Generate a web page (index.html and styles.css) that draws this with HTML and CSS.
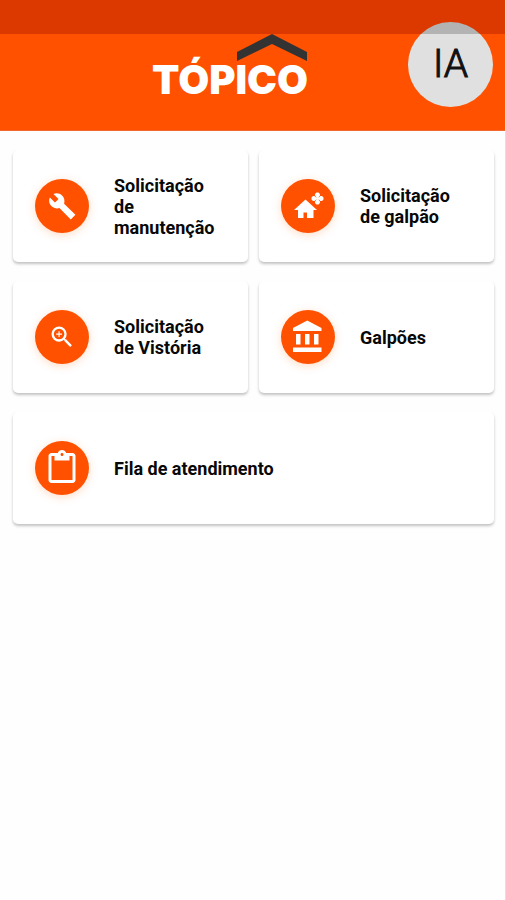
FILE: index.html
```html
<!DOCTYPE html>
<html lang="pt-BR">
<head>
<meta charset="utf-8">
<meta name="viewport" content="width=device-width, initial-scale=1">
<title>Tópico</title>
<link rel="stylesheet" href="styles.css">
</head>
<body>
<header class="header">
  <div class="status-bar"></div>
  <h1 class="logo">TÓPICO
    <svg class="logo-roof" viewBox="0 0 70 28" aria-hidden="true"><path d="M0 18 35 0 70 18v9L35 10 0 27z"/></svg>
  </h1>
  <button class="avatar" type="button">IA</button>
</header>
<main class="menu">
  <a class="card" href="#">
    <span class="badge"><svg class="icon" viewBox="0 0 24 24" aria-hidden="true"><path d="M23.500 19.500 13.800 10c.7-2.400.2-5.100-1.700-7-2-2-5-2.400-7.400-1.300L9 6 6 9 1.600 4.700C.4 7.100.9 10.100 2.900 12.100c1.900 1.900 4.600 2.400 6.900 1.700l9.700 9.700z"/></svg></span>
    <span class="label">Solicitação de manutenção</span>
  </a>
  <a class="card" href="#">
    <span class="badge"><svg class="icon icon-large" viewBox="0 0 36 36" aria-hidden="true"><path d="M15.500 11.500 4 22H8v8h5.500v-5.500H17V30h6.500v-8H27z"/><path d="M26.500 9.200 25 7.500V6l1.500-1.500h2L30 6v1.500l-1.500 1.700v.3h.3L30.500 8H32l1.500 1.500v2L32 13h-1.500l-1.700-1.500h-.3v.3L30 13.500V15l-1.500 1.500h-2L25 15v-1.500l1.500-1.700v-.3h-.3L24.500 13H23l-1.500-1.500v-2L23 8h1.500l1.700 1.500h.3z"/></svg></span>
    <span class="label">Solicitação de galpão</span>
  </a>
  <a class="card" href="#">
    <span class="badge"><svg class="icon" viewBox="0 0 24 24" aria-hidden="true"><path d="M15.500 14h-.79l-.28-.27A6.470 6.470 0 0 0 16 9.500 6.500 6.500 0 1 0 9.500 16c1.610 0 3.090-.59 4.230-1.570l.27.28v.79l5 4.990L20.490 19zm-6 0a4.500 4.500 0 1 1 0-9 4.500 4.500 0 0 1 0 9zM12 10h-2v2H9v-2H7V9h2V7h1v2h2z"/></svg></span>
    <span class="label">Solicitação de Vistória</span>
  </a>
  <a class="card" href="#">
    <span class="badge"><svg class="icon icon-large" viewBox="0 0 24 24" aria-hidden="true"><path d="M4 10v7h3v-7zm6 0v7h3v-7zM2 22h19v-3H2zm14-12v7h3v-7zM11.500 1 2 6v2h19V6z"/></svg></span>
    <span class="label">Galpões</span>
  </a>
  <a class="card card-wide" href="#">
    <span class="badge"><svg class="icon icon-large" viewBox="0 0 24 24" aria-hidden="true"><path d="M19 2h-4.180C14.400.84 13.300 0 12 0S9.600.84 9.180 2H5c-1.100 0-2 .9-2 2v16c0 1.100.9 2 2 2h14c1.100 0 2-.9 2-2V4c0-1.100-.9-2-2-2zm-7 0c.55 0 1 .45 1 1s-.45 1-1 1-1-.45-1-1 .45-1 1-1zm7 18H5V4h2v3h10V4h2z"/></svg></span>
    <span class="label">Fila de atendimento</span>
  </a>
</main>
</body>
</html>
```
FILE: styles.css
```css
* { box-sizing: border-box; }

body {
  margin: 0;
  min-height: 100vh;
  background: #fefefe;
  border-right: 1px solid #fcd8c4;
  font-family: Roboto, "Liberation Sans", sans-serif;
  color: #080808;
}

.header {
  position: relative;
  display: flex;
  justify-content: center;
  height: 131px;
  margin-right: -1px;
  padding-top: 54px;
  background: #ff5100;
  border-bottom: 1px solid #f06a30;
}

.status-bar {
  position: absolute;
  inset: 0 0 auto;
  height: 34px;
  background: #db3900;
}

.logo {
  position: relative;
  align-self: flex-start;
  margin: 0 46px 0 0;
  font: 900 40px/52px Inter, sans-serif;
  color: #fff;
}

.logo-roof {
  position: absolute;
  top: -20px;
  right: 1px;
  width: 70px;
  height: 28px;
  fill: #333;
}

.avatar {
  position: absolute;
  top: 22px;
  right: 13px;
  width: 85px;
  height: 85px;
  padding: 0;
  border: 0;
  border-radius: 50%;
  background: linear-gradient(#b3b3b3 12px, #e0e0e0 12px);
  font: 300 39px/85px Roboto, sans-serif;
  -webkit-text-stroke: 1px #111;
  color: #111;
}

.menu {
  display: grid;
  grid-template-columns: 1fr 1fr;
  gap: 19px 11px;
  padding: 19px 11px 20px 13px;
}

.card {
  display: flex;
  align-items: center;
  gap: 25px;
  min-height: 112px;
  padding: 0 22px;
  border-radius: 5px;
  background: #fff;
  box-shadow: 0 2px 3px rgba(0, 0, 0, 0.24);
  clip-path: inset(0 -4px -6px);
  color: inherit;
  text-decoration: none;
}

.card-wide { grid-column: 1 / -1; }

.badge {
  display: flex;
  flex: none;
  align-items: center;
  justify-content: center;
  width: 54px;
  height: 54px;
  border-radius: 50%;
  background: #ff5100;
  box-shadow: 0 2px 8px rgba(255, 120, 30, 0.25);
}

.icon {
  width: 28px;
  height: 28px;
  fill: #fff;
}

.icon-large {
  width: 36px;
  height: 36px;
}

.label {
  font-size: 18px;
  font-weight: 700;
  line-height: 21px;
}
```
